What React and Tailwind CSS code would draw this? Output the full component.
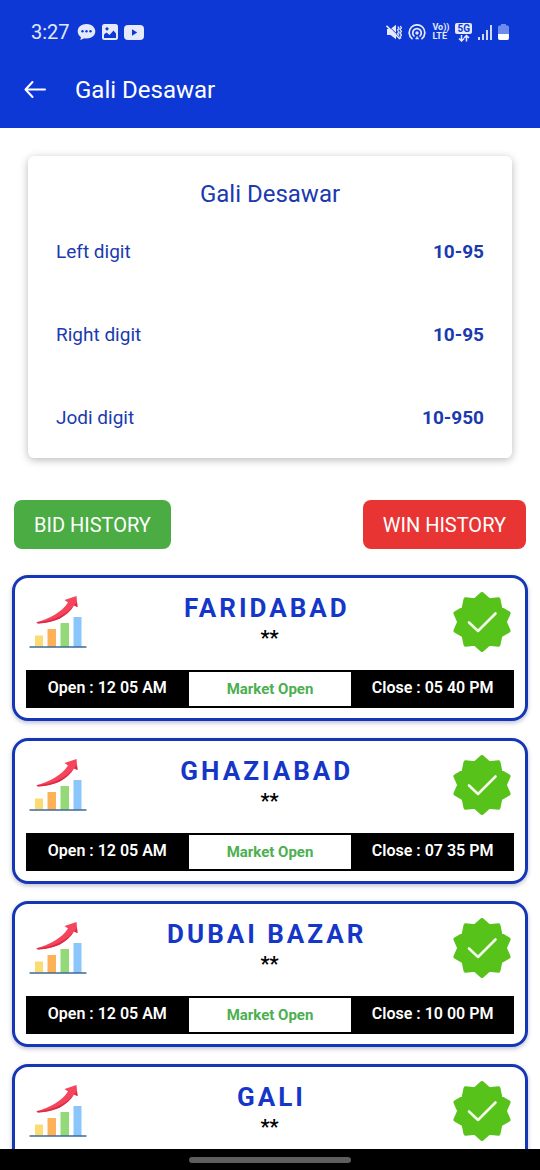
import React from 'react';

const rates = [
  { label: 'Left digit', value: '10-95' },
  { label: 'Right digit', value: '10-95' },
  { label: 'Jodi digit', value: '10-950' },
];

const markets = [
  { name: 'FARIDABAD ', result: '**', open: '12 05 AM', close: '05 40 PM' },
  { name: 'GHAZIABAD ', result: '**', open: '12 05 AM', close: '07 35 PM' },
  { name: 'DUBAI BAZAR ', result: '**', open: '12 05 AM', close: '10 00 PM' },
  { name: 'GALI', result: '**' },
];

// ten pointed badge outline, alternating tip and valley
const badgePoints = Array.from({ length: 20 }, (_, i) => {
  const r = i % 2 === 0 ? 28 : 22.8;
  const a = (i * Math.PI) / 10;
  return `${(30 + r * Math.sin(a)).toFixed(1)},${(30 - r * Math.cos(a)).toFixed(1)}`;
}).join(' ');

const VerifiedBadge = () => (
  <svg viewBox="0 0 60 60" className="h-[60px] w-[60px] shrink-0" aria-hidden="true">
    <polygon points={badgePoints} fill="#56c21a" stroke="#56c21a" strokeWidth="4" strokeLinejoin="round" />
    <path d="M17 30.5 L26 39 L43.5 21.5" fill="none" stroke="#f4fbe9" strokeWidth="2.6" strokeLinecap="round" strokeLinejoin="round" />
  </svg>
);

const GrowthChart = () => (
  <svg viewBox="0 0 58 54" className="h-[54px] w-[58px] shrink-0" aria-hidden="true">
    <path d="M6 40.500h8v11h-8z" fill="#fbdc72" />
    <path d="M18.500 34h8.500v18h-8.500z" fill="#fdb258" />
    <path d="M31.500 28h8.500v24h-8.500z" fill="#93d977" />
    <path d="M44.500 22h8v30h-8z" fill="#8ac6fb" />
    <path d="M1 52h56" stroke="#3f6a94" strokeWidth="1.4" strokeLinecap="round" />
    <path d="M8 27 C20 24 33 17 39 7.500 L35.500 5 L47.500 1 L48.500 12 L45 10.500 C38 22 25 28 9 28.500 C7.500 28.500 7.200 27.300 8 27Z" fill="#f4455d" />
    <path d="M9 28.500 C25 28 38 22 45 10.500 L48.500 12 L48 7 C38 20 25 26 8 27.300Z" fill="#dc2a45" />
  </svg>
);

const StatusBar = () => (
  <div className="flex h-16 items-center justify-between pl-[31px] pr-[31px] text-[#e4e9fb]">
    <div className="flex items-center gap-[7px]">
      <span className="text-xl leading-6">3:27</span>
      <div className="flex items-center gap-[6px]">
        <svg viewBox="0 0 19 18" className="h-[18px] w-[19px]" aria-hidden="true">
          <path d="M9.500 1C4.500 1 .7 4 .7 8.300c0 2.600 1.300 4.600 3.300 5.900L3.300 17l4.200-1.700c.6.1 1.300.2 2 .2 5 0 8.800-3 8.800-7.200S14.500 1 9.500 1Z" fill="currentColor" />
          <circle cx="5.500" cy="8.300" r="1.200" fill="#0d38d6" />
          <circle cx="9.500" cy="8.300" r="1.200" fill="#0d38d6" />
          <circle cx="13.500" cy="8.300" r="1.200" fill="#0d38d6" />
        </svg>
        <svg viewBox="0 0 16 16" className="h-4 w-4" aria-hidden="true">
          <rect width="16" height="16" rx="2.500" fill="currentColor" />
          <circle cx="5" cy="4.800" r="1.600" fill="#0d38d6" />
          <path d="M2 14V10.500L4.500 8.500L7.500 11L11.500 6.500L14 9.500V14Z" fill="#0d38d6" />
        </svg>
        <svg viewBox="0 0 20 15" className="h-[15px] w-5" aria-hidden="true">
          <rect width="20" height="15" rx="4" fill="currentColor" />
          <path d="M8 4.300L13.200 7.500L8 10.700Z" fill="#0d38d6" />
        </svg>
      </div>
    </div>
    <div className="flex items-center gap-[6px]">
      <svg viewBox="0 0 16 16" className="h-4 w-4" aria-hidden="true">
        <path d="M1 5h3.500L10 .8v14.400L4.500 11H1z" fill="currentColor" />
        <path d="M11.800 2.500l1.200 1.800-1.500 1.800 1.500 1.800-1.500 1.800 1.500 1.800M14.300 2l1.200 1.800L14 5.600l1.500 1.800L14 9.200l1.500 1.800-1.500 1.800 1 1.700" fill="none" stroke="currentColor" strokeWidth="1.300" />
        <path d="M1.300 1L10 9.200" stroke="#0d38d6" strokeWidth="1" />
        <path d="M.5 1.800L14 15" stroke="currentColor" strokeWidth="1.600" />
      </svg>
      <svg viewBox="0 0 18 16" className="h-4 w-[18px]" fill="none" stroke="currentColor" strokeWidth="1.700" strokeLinecap="round" aria-hidden="true">
        <path d="M4 14.600A7.800 7.800 0 1 1 14 14.600" />
        <path d="M6 12A4.300 4.300 0 1 1 12 12" />
        <circle cx="9" cy="9" r="1.700" fill="currentColor" stroke="none" />
        <path d="M9 12.500L7.500 15h3z" fill="currentColor" strokeWidth="0.500" />
      </svg>
      <div className="flex w-[17px] flex-col text-[9px] leading-[9px] font-bold">
        <span>Vo))</span>
        <span>LTE</span>
      </div>
      <div className="flex flex-col items-center">
        <span className="rounded-[2px] bg-[#e4e9fb] px-[2px] text-[10px] leading-[11px] font-bold text-[#0d38d6]">5G</span>
        <svg viewBox="0 0 12 8" className="h-2 w-3" fill="none" stroke="currentColor" strokeWidth="1.500" aria-hidden="true">
          <path d="M3.500 1v6M1 4.500L3.500 7 6 4.500M8.500 7.500V1.500M6 4L8.500 1.500 11 4" />
        </svg>
      </div>
      <svg viewBox="0 0 14 15" className="h-[15px] w-[14px]" stroke="currentColor" strokeWidth="1.800" aria-hidden="true">
        <path d="M1 15v-3M5 15V9M9 15V5M13 15V0" />
      </svg>
      <svg viewBox="0 0 11 16" className="h-4 w-[11px]" aria-hidden="true">
        <path d="M3 0h5v1.500h1.500Q11 1.500 11 3v8H0V3Q0 1.500 1.500 1.500H3z" fill="#6f8cec" />
        <path d="M0 10h11v4Q11 16 9.500 16h-8Q0 16 0 14z" fill="#fff" />
      </svg>
    </div>
  </div>
);

const MarketCard = ({ market }) => (
  <article className="rounded-2xl border-3 border-[#1537b5] bg-white px-[11px] pt-[14px] pb-[10px] shadow-[0_2px_4px_rgba(40,50,110,0.3)]">
    <div className="flex h-[78px] items-start justify-between">
      <div className="pt-[3px] pl-[3px]">
        <GrowthChart />
      </div>
      <div className="flex flex-col items-center text-center">
        <h2 className="pl-1 text-[26px] leading-8 font-bold tracking-[3px] whitespace-pre text-[#1537c8]">{market.name}</h2>
        <p className="text-xl leading-7 font-bold text-black">{market.result}</p>
      </div>
      <div className="pr-[2px]">
        <VerifiedBadge />
      </div>
    </div>
    {market.open && (
      <div className="grid h-[38px] grid-cols-3 bg-black text-center leading-9 font-semibold text-white">
        <span>Open : {market.open}</span>
        <span className="border-y-2 border-black bg-white text-[15px] leading-[34px] font-bold text-[#4caf50]">Market Open</span>
        <span>Close : {market.close}</span>
      </div>
    )}
  </article>
);

export default function App() {
  return (
    <div className="flex h-screen flex-col overflow-hidden bg-white font-[Roboto,sans-serif]">
      <header className="h-32 shrink-0 bg-[#0d38d6] text-white">
        <StatusBar />
        <div className="flex h-[51px] items-center gap-[27px] pl-6">
          <button type="button" aria-label="Back" className="h-6 w-6">
            <svg viewBox="0 0 24 24" className="h-6 w-6" fill="none" stroke="currentColor" strokeWidth="2" strokeLinecap="round" strokeLinejoin="round" aria-hidden="true">
              <path d="M21 11.500H2M8.500 4L1.500 11.500L8.500 19" />
            </svg>
          </button>
          <h1 className="text-2xl">Gali Desawar</h1>
        </div>
      </header>

      <main className="min-h-0 flex-1 overflow-hidden">
        <section className="mx-7 mt-7 rounded-md bg-white px-7 pt-[22px] pb-[26px] text-[#1a3ab0] shadow-[0_2px_8px_rgba(0,0,0,0.28)]">
          <h2 className="text-center text-2xl">Gali Desawar</h2>
          <dl className="mt-7 flex flex-col gap-[55px] text-[19px] leading-7">
            {rates.map((rate) => (
              <div key={rate.label} className="flex justify-between">
                <dt>{rate.label}</dt>
                <dd className="font-bold">{rate.value}</dd>
              </div>
            ))}
          </dl>
        </section>

        <div className="mt-[42px] flex justify-between px-[14px] text-xl text-white">
          <button type="button" className="h-[49px] rounded-lg bg-[#4aac43] px-5">BID HISTORY</button>
          <button type="button" className="h-[49px] rounded-lg bg-[#e93434] px-5">WIN HISTORY</button>
        </div>

        <div className="mt-[26px] flex flex-col gap-[17px] px-3">
          {markets.map((market) => (
            <MarketCard key={market.name} market={market} />
          ))}
        </div>
      </main>

      <footer className="flex h-[21px] shrink-0 items-center justify-center bg-black">
        <div className="h-[6px] w-[162px] rounded-full bg-[#5e5e5e]" />
      </footer>
    </div>
  );
}
